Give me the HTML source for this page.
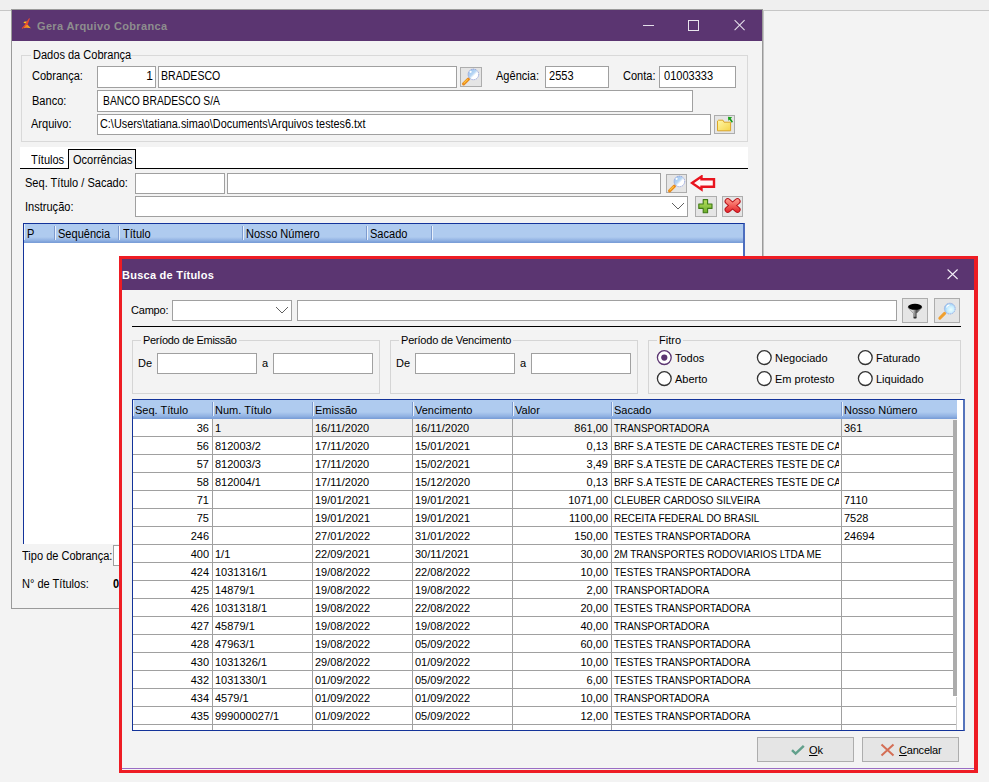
<!DOCTYPE html><html><head><meta charset="utf-8"><style>
html,body{margin:0;padding:0;}
body{width:989px;height:782px;position:relative;overflow:hidden;background:#f3f3f3;font-family:"Liberation Sans",sans-serif;color:#000;}
.t{position:absolute;white-space:nowrap;font-family:"Liberation Sans",sans-serif;}
svg{position:absolute;}
</style></head><body>
<div style="position:absolute;left:0px;top:0px;width:989px;height:10px;background:#efefef;"></div>
<div style="position:absolute;left:0px;top:10px;width:989px;height:1px;background:#c6c6c6;"></div>
<div style="position:absolute;left:11px;top:9px;width:752px;height:600px;box-sizing:border-box;border:1px solid #9a9a9a;background:#f3f3f3;"></div>
<div style="position:absolute;left:763px;top:10px;width:1px;height:599px;background:#c4c4c4;"></div>
<div style="position:absolute;left:12px;top:10px;width:750px;height:31px;background:#5b3571;"></div>
<svg style="left:18px;top:15px" width="18" height="18" viewBox="0 0 18 18"><defs><linearGradient id="ig" x1="0" y1="0" x2="1" y2="0"><stop offset="0" stop-color="#f06a28"/><stop offset="1" stop-color="#fcc41c"/></linearGradient></defs><path d="M5.5 7.2 L6.9 6.5 L9 6.5 L8.2 8.4 L6 8 Z" fill="#fbbe20"/><path d="M7.2 10 L9.4 9.4 L13.3 13.7 L12.2 13.1 L8.5 12.8 L5.5 13.3 Z" fill="url(#ig)"/><path d="M12 3.2 L9.6 9.4 L7.6 10.6 L4.2 14 L3.8 12.9 L6.7 9.9 L7.8 8.3 L8.8 6.4 L10.9 3.6 Z" fill="#ec4a2e"/></svg>
<span class="t" style="left:37px;top:20px;font-size:11px;line-height:13px;font-weight:bold;color:#8e8e8e;letter-spacing:0.35px;">Gera Arquivo Cobranca</span>
<div style="position:absolute;left:643px;top:25px;width:11px;height:1px;background:#e4dfea;"></div>
<div style="position:absolute;left:688px;top:20px;width:11px;height:11px;box-sizing:border-box;border:1px solid #e8e4ec;"></div>
<svg style="left:733px;top:19px" width="13" height="13" viewBox="0 0 13 13"><path d="M1.6 1.2 L11.6 11.2 M11.6 1.2 L1.6 11.2" stroke="#e4dfea" stroke-width="1.05"/></svg>
<div style="position:absolute;left:21px;top:55px;width:727px;height:87px;box-sizing:border-box;border:1px solid #d9d9d9;"></div>
<div style="position:absolute;left:31px;top:50px;width:100px;height:9px;background:#f3f3f3;"></div>
<span class="t" style="left:33px;top:48px;font-size:12px;line-height:14px;transform:scaleX(0.92);transform-origin:0 0;">Dados da Cobrança</span>
<span class="t" style="left:32px;top:69px;font-size:12px;line-height:14px;transform:scaleX(0.92);transform-origin:0 0;">Cobrança:</span>
<div style="position:absolute;left:97px;top:66px;width:59px;height:22px;box-sizing:border-box;border:1px solid #a0a0a0;background:#fff;"></div>
<span class="t" style="right:836px;top:69px;font-size:12px;line-height:14px;">1</span>
<div style="position:absolute;left:158px;top:66px;width:299px;height:22px;box-sizing:border-box;border:1px solid #a0a0a0;background:#fff;"></div>
<span class="t" style="left:161px;top:69px;font-size:12px;line-height:14px;transform:scaleX(0.88);transform-origin:0 0;">BRADESCO</span>
<div style="position:absolute;left:460px;top:67px;width:22px;height:20px;box-sizing:border-box;border:1px solid #adadad;background:#e5e5e5;"></div>
<svg style="left:460px;top:67px" width="22" height="21" viewBox="0 0 22 21"><defs><linearGradient id="lg460" x1="0" y1="0" x2="1" y2="1"><stop offset="0" stop-color="#8fbcec"/><stop offset="0.45" stop-color="#b8d6f4"/><stop offset="0.6" stop-color="#ffffff"/><stop offset="1" stop-color="#ffffff"/></linearGradient></defs><line x1="3.6" y1="16.8" x2="8.4" y2="12.2" stroke="#e88a1c" stroke-width="3.2" stroke-linecap="round"/><line x1="4" y1="16" x2="7.6" y2="12.6" stroke="#ffc640" stroke-width="1.1" stroke-linecap="round" stroke-dasharray="1.2 0.6"/><circle cx="13.4" cy="7.4" r="5.3" fill="url(#lg460)" stroke="#8a9ad8" stroke-width="0.9" stroke-dasharray="1.3 0.7"/><circle cx="10.6" cy="4.8" r="1.1" fill="#ffffff"/></svg>
<span class="t" style="left:496px;top:69px;font-size:12px;line-height:14px;transform:scaleX(0.92);transform-origin:0 0;">Agência:</span>
<div style="position:absolute;left:545px;top:66px;width:64px;height:22px;box-sizing:border-box;border:1px solid #a0a0a0;background:#fff;"></div>
<span class="t" style="left:549px;top:69px;font-size:12px;line-height:14px;transform:scaleX(0.92);transform-origin:0 0;">2553</span>
<span class="t" style="left:623px;top:69px;font-size:12px;line-height:14px;transform:scaleX(0.92);transform-origin:0 0;">Conta:</span>
<div style="position:absolute;left:659px;top:66px;width:77px;height:22px;box-sizing:border-box;border:1px solid #a0a0a0;background:#fff;"></div>
<span class="t" style="left:664px;top:69px;font-size:12px;line-height:14px;transform:scaleX(0.92);transform-origin:0 0;">01003333</span>
<span class="t" style="left:32px;top:94px;font-size:12px;line-height:14px;transform:scaleX(0.92);transform-origin:0 0;">Banco:</span>
<div style="position:absolute;left:97px;top:90px;width:596px;height:22px;box-sizing:border-box;border:1px solid #a0a0a0;background:#fff;"></div>
<span class="t" style="left:103px;top:94px;font-size:12px;line-height:14px;transform:scaleX(0.86);transform-origin:0 0;">BANCO BRADESCO S/A</span>
<span class="t" style="left:31px;top:117px;font-size:12px;line-height:14px;transform:scaleX(0.92);transform-origin:0 0;">Arquivo:</span>
<div style="position:absolute;left:97px;top:114px;width:614px;height:21px;box-sizing:border-box;border:1px solid #a0a0a0;background:#fff;"></div>
<span class="t" style="left:100px;top:117px;font-size:12px;line-height:14px;transform:scaleX(0.905);transform-origin:0 0;">C:\Users\tatiana.simao\Documents\Arquivos testes6.txt</span>
<div style="position:absolute;left:714px;top:115px;width:21px;height:19px;box-sizing:border-box;border:1px solid #adadad;background:#e5e5e5;"></div>
<svg style="left:714px;top:115px" width="21" height="19" viewBox="0 0 21 19"><defs><linearGradient id="fg" x1="0" y1="0" x2="1" y2="1"><stop offset="0" stop-color="#fff7a8"/><stop offset="1" stop-color="#f5d44a"/></linearGradient></defs><path d="M3.5 6 L3.5 15.8 L16.6 15.8 L16.6 7.2 L10 7.2 L9 5.2 L4.5 5.2 Z" fill="url(#fg)" stroke="#dba628" stroke-width="1"/><path d="M14 1.8 L18.2 2.2 L14.3 5.8 Z" fill="#16a016"/><line x1="15.6" y1="3.6" x2="18.4" y2="7.2" stroke="#1a9a1a" stroke-width="1.6"/></svg>
<div style="position:absolute;left:20px;top:147px;width:728px;height:21px;background:#fff;"></div>
<div style="position:absolute;left:20px;top:168px;width:728px;height:1px;background:#000;"></div>
<div style="position:absolute;left:68px;top:149px;width:68px;height:20px;box-sizing:border-box;border:1px solid #000;border-bottom:none;background:#f3f3f3;"></div>
<span class="t" style="left:31px;top:153px;font-size:12px;line-height:14px;transform:scaleX(0.92);transform-origin:0 0;">Títulos</span>
<span class="t" style="left:73px;top:153px;font-size:12px;line-height:14px;transform:scaleX(0.92);transform-origin:0 0;">Ocorrências</span>
<span class="t" style="left:25px;top:176px;font-size:12px;line-height:14px;transform:scaleX(0.92);transform-origin:0 0;">Seq. Título / Sacado:</span>
<div style="position:absolute;left:135px;top:173px;width:90px;height:21px;box-sizing:border-box;border:1px solid #a0a0a0;background:#fff;"></div>
<div style="position:absolute;left:227px;top:173px;width:434px;height:21px;box-sizing:border-box;border:1px solid #a0a0a0;background:#fff;"></div>
<div style="position:absolute;left:666px;top:174px;width:21px;height:19px;box-sizing:border-box;border:1px solid #adadad;background:#e5e5e5;"></div>
<svg style="left:666px;top:174px" width="22" height="21" viewBox="0 0 22 21"><defs><linearGradient id="lg666" x1="0" y1="0" x2="1" y2="1"><stop offset="0" stop-color="#8fbcec"/><stop offset="0.45" stop-color="#b8d6f4"/><stop offset="0.6" stop-color="#ffffff"/><stop offset="1" stop-color="#ffffff"/></linearGradient></defs><line x1="3.6" y1="16.8" x2="8.4" y2="12.2" stroke="#e88a1c" stroke-width="3.2" stroke-linecap="round"/><line x1="4" y1="16" x2="7.6" y2="12.6" stroke="#ffc640" stroke-width="1.1" stroke-linecap="round" stroke-dasharray="1.2 0.6"/><circle cx="13.4" cy="7.4" r="5.3" fill="url(#lg666)" stroke="#8a9ad8" stroke-width="0.9" stroke-dasharray="1.3 0.7"/><circle cx="10.6" cy="4.8" r="1.1" fill="#ffffff"/></svg>
<svg style="left:690px;top:175px" width="28" height="18" viewBox="0 0 28 18"><path d="M2 8 L11.5 1.5 L11.5 4.3 L24 4.3 L24 11.7 L11.5 11.7 L11.5 14.5 Z" fill="#fff8f8" stroke="#e8141e" stroke-width="2.4" stroke-linejoin="miter"/></svg>
<span class="t" style="left:25px;top:200px;font-size:12px;line-height:14px;transform:scaleX(0.92);transform-origin:0 0;">Instrução:</span>
<div style="position:absolute;left:135px;top:196px;width:553px;height:21px;box-sizing:border-box;border:1px solid #a0a0a0;background:#fff;"></div>
<svg style="left:671px;top:202px" width="14" height="8" viewBox="0 0 14 8"><path d="M1 1 L7 7 L13 1" fill="none" stroke="#606060" stroke-width="1"/></svg>
<div style="position:absolute;left:695px;top:196px;width:22px;height:21px;box-sizing:border-box;border:1px solid #adadad;background:#e5e5e5;"></div>
<svg style="left:695px;top:196px" width="22" height="21" viewBox="0 0 22 21"><defs><linearGradient id="gp" x1="0" y1="0" x2="0" y2="1"><stop offset="0" stop-color="#b8e060"/><stop offset="1" stop-color="#6cae2a"/></linearGradient></defs><path d="M8.2 3.6 L12.6 3.6 L12.6 8 L17 8 L17 12.4 L12.6 12.4 L12.6 16.8 L8.2 16.8 L8.2 12.4 L3.8 12.4 L3.8 8 L8.2 8 Z" fill="url(#gp)" stroke="#3f7a14" stroke-width="1.1" stroke-linejoin="round"/></svg>
<div style="position:absolute;left:722px;top:196px;width:21px;height:21px;box-sizing:border-box;border:1px solid #adadad;background:#e5e5e5;"></div>
<svg style="left:722px;top:196px" width="21" height="20" viewBox="0 0 21 20"><defs><linearGradient id="rx" gradientUnits="userSpaceOnUse" x1="0" y1="2" x2="0" y2="17"><stop offset="0" stop-color="#ffa494"/><stop offset="0.5" stop-color="#f4605a"/><stop offset="1" stop-color="#e01c24"/></linearGradient></defs><path d="M5.8 5.3 L15.4 13.7 M15.4 5.3 L5.8 13.7" stroke="#b8141c" stroke-width="6.4" stroke-linecap="round"/><path d="M5.8 5.3 L15.4 13.7 M15.4 5.3 L5.8 13.7" stroke="url(#rx)" stroke-width="4.4" stroke-linecap="round"/></svg>
<div style="position:absolute;left:23px;top:223px;width:722px;height:321px;box-sizing:border-box;border:1px solid #13339a;border-right:2px solid #4d6ebf;border-bottom:none;background:#fff;"></div>
<div style="position:absolute;left:24px;top:224px;width:719px;height:19px;background:linear-gradient(#afcbef 0,#afcbef 13px,#8badE0 17px,#7b9fd8 18px);"></div>
<div style="position:absolute;left:24px;top:224px;width:1px;height:16px;background:#e4edf9;"></div>
<div style="position:absolute;left:54px;top:226px;width:1px;height:14px;background:#7d9bcf;"></div>
<div style="position:absolute;left:55px;top:226px;width:1px;height:14px;background:#e8f0fb;"></div>
<div style="position:absolute;left:118px;top:226px;width:1px;height:14px;background:#7d9bcf;"></div>
<div style="position:absolute;left:119px;top:226px;width:1px;height:14px;background:#e8f0fb;"></div>
<div style="position:absolute;left:242px;top:226px;width:1px;height:14px;background:#7d9bcf;"></div>
<div style="position:absolute;left:243px;top:226px;width:1px;height:14px;background:#e8f0fb;"></div>
<div style="position:absolute;left:366px;top:226px;width:1px;height:14px;background:#7d9bcf;"></div>
<div style="position:absolute;left:367px;top:226px;width:1px;height:14px;background:#e8f0fb;"></div>
<div style="position:absolute;left:431px;top:226px;width:1px;height:14px;background:#7d9bcf;"></div>
<div style="position:absolute;left:432px;top:226px;width:1px;height:14px;background:#e8f0fb;"></div>
<span class="t" style="left:27px;top:227px;font-size:12px;line-height:14px;transform:scaleX(0.92);transform-origin:0 0;">P</span>
<span class="t" style="left:58px;top:227px;font-size:12px;line-height:14px;transform:scaleX(0.92);transform-origin:0 0;">Sequência</span>
<span class="t" style="left:123px;top:227px;font-size:12px;line-height:14px;transform:scaleX(0.92);transform-origin:0 0;">Título</span>
<span class="t" style="left:246px;top:227px;font-size:12px;line-height:14px;transform:scaleX(0.92);transform-origin:0 0;">Nosso Número</span>
<span class="t" style="left:370px;top:227px;font-size:12px;line-height:14px;transform:scaleX(0.92);transform-origin:0 0;">Sacado</span>
<span class="t" style="left:22px;top:549px;font-size:12px;line-height:14px;transform:scaleX(0.92);transform-origin:0 0;">Tipo de Cobrança:</span>
<div style="position:absolute;left:113px;top:545px;width:18px;height:21px;box-sizing:border-box;border:1px solid #a0a0a0;background:#fff;"></div>
<span class="t" style="left:22px;top:577px;font-size:12px;line-height:14px;transform:scaleX(0.92);transform-origin:0 0;">N° de Títulos:</span>
<span class="t" style="left:113px;top:577px;font-size:12px;line-height:14px;transform:scaleX(0.92);transform-origin:0 0;font-weight:bold;">0</span>
<div style="position:absolute;left:119px;top:256px;width:859px;height:517px;box-sizing:border-box;border:3px solid #ee1c24;border-right-width:4px;background:#f3f3f3;"></div>
<div style="position:absolute;left:122px;top:259px;width:852px;height:31px;background:#5b3571;"></div>
<div style="position:absolute;left:122px;top:768px;width:852px;height:1px;background:#9a6cc4;"></div>
<span class="t" style="left:122px;top:269px;font-size:11px;line-height:13px;font-weight:bold;color:#fff;letter-spacing:0.25px;">Busca de Títulos</span>
<svg style="left:946px;top:268px" width="13" height="12" viewBox="0 0 13 12"><path d="M1.6 1.5 L11.6 11 M11.6 1.5 L1.6 11" stroke="#f4f0f8" stroke-width="1.05"/></svg>
<span class="t" style="left:131px;top:304px;font-size:11px;line-height:13px;letter-spacing:-0.2px;">Campo:</span>
<div style="position:absolute;left:172px;top:300px;width:120px;height:21px;box-sizing:border-box;border:1px solid #a0a0a0;background:#fff;"></div>
<svg style="left:275px;top:306px" width="14" height="8" viewBox="0 0 14 8"><path d="M1 1 L7 7 L13 1" fill="none" stroke="#606060" stroke-width="1"/></svg>
<div style="position:absolute;left:297px;top:300px;width:600px;height:21px;box-sizing:border-box;border:1px solid #a0a0a0;background:#fff;"></div>
<div style="position:absolute;left:902px;top:298px;width:26px;height:25px;box-sizing:border-box;border:1px solid #adadad;background:#e5e5e5;"></div>
<svg style="left:902px;top:298px" width="25" height="25" viewBox="0 0 25 25"><defs><linearGradient id="fn" x1="0" y1="0" x2="1" y2="0"><stop offset="0" stop-color="#ffffff"/><stop offset="0.35" stop-color="#d0d0d0"/><stop offset="0.6" stop-color="#505050"/><stop offset="1" stop-color="#9a9a9a"/></linearGradient></defs><path d="M6 9.5 L11.6 15.6 L11.6 20 L14.4 20 L14.4 15.6 L20 9.5 Z" fill="url(#fn)"/><path d="M6 9.5 L11.6 15.6 L11.6 20 L14.4 20 L14.4 15.6 L20 9.5" fill="none" stroke="#707070" stroke-width="0.6"/><ellipse cx="13" cy="8.8" rx="7" ry="3" fill="#000"/><rect x="11.8" y="18.8" width="2.4" height="1.6" fill="#303030"/></svg>
<div style="position:absolute;left:934px;top:298px;width:26px;height:25px;box-sizing:border-box;border:1px solid #adadad;background:#e5e5e5;"></div>
<svg style="left:934px;top:298px" width="26" height="25" viewBox="0 0 26 25"><defs><radialGradient id="lb934" cx="0.6" cy="0.6" r="0.65"><stop offset="0" stop-color="#eaffff"/><stop offset="0.5" stop-color="#c8ecff"/><stop offset="1" stop-color="#8ec4f0"/></radialGradient></defs><line x1="5.8" y1="20.2" x2="10.6" y2="15.4" stroke="#f0a030" stroke-width="3" stroke-linecap="round"/><circle cx="15.8" cy="10.6" r="5.4" fill="url(#lb934)" stroke="#9ab0e6" stroke-width="1" stroke-dasharray="1.5 0.7"/><path d="M12.5 9.5 A3.5 3.5 0 0 1 15.5 6.8" fill="none" stroke="#fff" stroke-width="1.2"/></svg>
<div style="position:absolute;left:132px;top:326px;width:829px;height:1px;background:#000;"></div>
<div style="position:absolute;left:132px;top:340px;width:248px;height:54px;box-sizing:border-box;border:1px solid #d5d5d5;"></div>
<span class="t" style="left:141px;top:334px;font-size:11px;line-height:13px;background:#f3f3f3;padding:0 2px;letter-spacing:-0.3px;">Período de Emissão</span>
<div style="position:absolute;left:390px;top:340px;width:248px;height:54px;box-sizing:border-box;border:1px solid #d5d5d5;"></div>
<span class="t" style="left:399px;top:334px;font-size:11px;line-height:13px;background:#f3f3f3;padding:0 2px;letter-spacing:-0.2px;">Período de Vencimento</span>
<div style="position:absolute;left:648px;top:340px;width:313px;height:54px;box-sizing:border-box;border:1px solid #d5d5d5;"></div>
<span class="t" style="left:657px;top:334px;font-size:11px;line-height:13px;background:#f3f3f3;padding:0 2px;letter-spacing:0px;">Fitro</span>
<span class="t" style="left:138px;top:357px;font-size:11px;line-height:13px;">De</span>
<div style="position:absolute;left:157px;top:353px;width:100px;height:21px;box-sizing:border-box;border:1px solid #a0a0a0;background:#fff;"></div>
<span class="t" style="left:262px;top:357px;font-size:11px;line-height:13px;">a</span>
<div style="position:absolute;left:273px;top:353px;width:100px;height:21px;box-sizing:border-box;border:1px solid #a0a0a0;background:#fff;"></div>
<span class="t" style="left:396px;top:357px;font-size:11px;line-height:13px;">De</span>
<div style="position:absolute;left:415px;top:353px;width:100px;height:21px;box-sizing:border-box;border:1px solid #a0a0a0;background:#fff;"></div>
<span class="t" style="left:520px;top:357px;font-size:11px;line-height:13px;">a</span>
<div style="position:absolute;left:531px;top:353px;width:100px;height:21px;box-sizing:border-box;border:1px solid #a0a0a0;background:#fff;"></div>
<svg style="left:656px;top:349px" width="17" height="17" viewBox="0 0 17 17"><circle cx="8.3" cy="8.6" r="6.9" fill="#fff" stroke="#5b3571" stroke-width="1.3"/><circle cx="8.3" cy="8.6" r="3.1" fill="#5b3571"/></svg>
<span class="t" style="left:675px;top:352px;font-size:11px;line-height:13px;">Todos</span>
<svg style="left:656px;top:370px" width="17" height="17" viewBox="0 0 17 17"><circle cx="8.3" cy="8.6" r="6.9" fill="#fff" stroke="#333" stroke-width="1.3"/></svg>
<span class="t" style="left:675px;top:373px;font-size:11px;line-height:13px;">Aberto</span>
<svg style="left:756px;top:349px" width="17" height="17" viewBox="0 0 17 17"><circle cx="8.3" cy="8.6" r="6.9" fill="#fff" stroke="#333" stroke-width="1.3"/></svg>
<span class="t" style="left:775px;top:352px;font-size:11px;line-height:13px;">Negociado</span>
<svg style="left:756px;top:370px" width="17" height="17" viewBox="0 0 17 17"><circle cx="8.3" cy="8.6" r="6.9" fill="#fff" stroke="#333" stroke-width="1.3"/></svg>
<span class="t" style="left:775px;top:373px;font-size:11px;line-height:13px;">Em protesto</span>
<svg style="left:857px;top:349px" width="17" height="17" viewBox="0 0 17 17"><circle cx="8.3" cy="8.6" r="6.9" fill="#fff" stroke="#333" stroke-width="1.3"/></svg>
<span class="t" style="left:876px;top:352px;font-size:11px;line-height:13px;">Faturado</span>
<svg style="left:857px;top:370px" width="17" height="17" viewBox="0 0 17 17"><circle cx="8.3" cy="8.6" r="6.9" fill="#fff" stroke="#333" stroke-width="1.3"/></svg>
<span class="t" style="left:876px;top:373px;font-size:11px;line-height:13px;">Liquidado</span>
<div style="position:absolute;left:132px;top:399px;width:833px;height:332px;box-sizing:border-box;border:1px solid #13339a;border-right:2px solid #5574bb;background:#fff;"></div>
<div style="position:absolute;left:133px;top:400px;width:824px;height:19px;background:linear-gradient(#afcbef 0,#afcbef 12px,#8badE0 17px,#7b9fd8 18px);"></div>
<div style="position:absolute;left:133px;top:400px;width:1px;height:16px;background:#e4edf9;"></div>
<div style="position:absolute;left:212px;top:402px;width:1px;height:14px;background:#7d9bcf;"></div>
<div style="position:absolute;left:213px;top:402px;width:1px;height:14px;background:#e8f0fb;"></div>
<div style="position:absolute;left:312px;top:402px;width:1px;height:14px;background:#7d9bcf;"></div>
<div style="position:absolute;left:313px;top:402px;width:1px;height:14px;background:#e8f0fb;"></div>
<div style="position:absolute;left:412px;top:402px;width:1px;height:14px;background:#7d9bcf;"></div>
<div style="position:absolute;left:413px;top:402px;width:1px;height:14px;background:#e8f0fb;"></div>
<div style="position:absolute;left:512px;top:402px;width:1px;height:14px;background:#7d9bcf;"></div>
<div style="position:absolute;left:513px;top:402px;width:1px;height:14px;background:#e8f0fb;"></div>
<div style="position:absolute;left:611px;top:402px;width:1px;height:14px;background:#7d9bcf;"></div>
<div style="position:absolute;left:612px;top:402px;width:1px;height:14px;background:#e8f0fb;"></div>
<div style="position:absolute;left:841px;top:402px;width:1px;height:14px;background:#7d9bcf;"></div>
<div style="position:absolute;left:842px;top:402px;width:1px;height:14px;background:#e8f0fb;"></div>
<span class="t" style="left:135px;top:404px;font-size:11px;line-height:13px;">Seq. Título</span>
<span class="t" style="left:215px;top:404px;font-size:11px;line-height:13px;">Num. Título</span>
<span class="t" style="left:315px;top:404px;font-size:11px;line-height:13px;">Emissão</span>
<span class="t" style="left:415px;top:404px;font-size:11px;line-height:13px;">Vencimento</span>
<span class="t" style="left:515px;top:404px;font-size:11px;line-height:13px;">Valor</span>
<span class="t" style="left:614px;top:404px;font-size:11px;line-height:13px;">Sacado</span>
<span class="t" style="left:844px;top:404px;font-size:11px;line-height:13px;">Nosso Número</span>
<div style="position:absolute;left:133px;top:419px;width:824px;height:311px;overflow:hidden;">
<div style="position:absolute;left:80px;top:0px;width:744px;height:17px;background:#f0f0f0;"></div>
<div style="position:absolute;left:0;top:17px;width:824px;height:1px;background:#a0a0a0;"></div>
<span class="t" style="left:-1px;width:77px;text-align:right;top:3px;font-size:11px;line-height:13px;">36</span>
<span class="t" style="left:82px;top:3px;width:95px;overflow:hidden;font-size:11px;line-height:13px;">1</span>
<span class="t" style="left:182px;top:3px;width:95px;overflow:hidden;font-size:11px;line-height:13px;">16/11/2020</span>
<span class="t" style="left:282px;top:3px;width:95px;overflow:hidden;font-size:11px;line-height:13px;">16/11/2020</span>
<span class="t" style="left:379px;width:96px;text-align:right;top:3px;font-size:11px;line-height:13px;">861,00</span>
<div style="position:absolute;left:481px;top:3px;width:225px;height:13px;overflow:hidden;"><span class="t" style="left:0;top:0;font-size:11px;line-height:13px;transform:scaleX(0.9);transform-origin:0 0;">TRANSPORTADORA</span></div>
<span class="t" style="left:711px;top:3px;width:111px;overflow:hidden;font-size:11px;line-height:13px;">361</span>
<div style="position:absolute;left:0;top:35px;width:824px;height:1px;background:#a0a0a0;"></div>
<span class="t" style="left:-1px;width:77px;text-align:right;top:21px;font-size:11px;line-height:13px;">56</span>
<span class="t" style="left:82px;top:21px;width:95px;overflow:hidden;font-size:11px;line-height:13px;">812003/2</span>
<span class="t" style="left:182px;top:21px;width:95px;overflow:hidden;font-size:11px;line-height:13px;">17/11/2020</span>
<span class="t" style="left:282px;top:21px;width:95px;overflow:hidden;font-size:11px;line-height:13px;">15/01/2021</span>
<span class="t" style="left:379px;width:96px;text-align:right;top:21px;font-size:11px;line-height:13px;">0,13</span>
<div style="position:absolute;left:481px;top:21px;width:225px;height:13px;overflow:hidden;"><span class="t" style="left:0;top:0;font-size:11px;line-height:13px;transform:scaleX(0.9);transform-origin:0 0;">BRF S.A TESTE DE CARACTERES TESTE DE CARACTERES</span></div>
<div style="position:absolute;left:0;top:53px;width:824px;height:1px;background:#a0a0a0;"></div>
<span class="t" style="left:-1px;width:77px;text-align:right;top:39px;font-size:11px;line-height:13px;">57</span>
<span class="t" style="left:82px;top:39px;width:95px;overflow:hidden;font-size:11px;line-height:13px;">812003/3</span>
<span class="t" style="left:182px;top:39px;width:95px;overflow:hidden;font-size:11px;line-height:13px;">17/11/2020</span>
<span class="t" style="left:282px;top:39px;width:95px;overflow:hidden;font-size:11px;line-height:13px;">15/02/2021</span>
<span class="t" style="left:379px;width:96px;text-align:right;top:39px;font-size:11px;line-height:13px;">3,49</span>
<div style="position:absolute;left:481px;top:39px;width:225px;height:13px;overflow:hidden;"><span class="t" style="left:0;top:0;font-size:11px;line-height:13px;transform:scaleX(0.9);transform-origin:0 0;">BRF S.A TESTE DE CARACTERES TESTE DE CARACTERES</span></div>
<div style="position:absolute;left:0;top:71px;width:824px;height:1px;background:#a0a0a0;"></div>
<span class="t" style="left:-1px;width:77px;text-align:right;top:57px;font-size:11px;line-height:13px;">58</span>
<span class="t" style="left:82px;top:57px;width:95px;overflow:hidden;font-size:11px;line-height:13px;">812004/1</span>
<span class="t" style="left:182px;top:57px;width:95px;overflow:hidden;font-size:11px;line-height:13px;">17/11/2020</span>
<span class="t" style="left:282px;top:57px;width:95px;overflow:hidden;font-size:11px;line-height:13px;">15/12/2020</span>
<span class="t" style="left:379px;width:96px;text-align:right;top:57px;font-size:11px;line-height:13px;">0,13</span>
<div style="position:absolute;left:481px;top:57px;width:225px;height:13px;overflow:hidden;"><span class="t" style="left:0;top:0;font-size:11px;line-height:13px;transform:scaleX(0.9);transform-origin:0 0;">BRF S.A TESTE DE CARACTERES TESTE DE CARACTERES</span></div>
<div style="position:absolute;left:0;top:89px;width:824px;height:1px;background:#a0a0a0;"></div>
<span class="t" style="left:-1px;width:77px;text-align:right;top:75px;font-size:11px;line-height:13px;">71</span>
<span class="t" style="left:182px;top:75px;width:95px;overflow:hidden;font-size:11px;line-height:13px;">19/01/2021</span>
<span class="t" style="left:282px;top:75px;width:95px;overflow:hidden;font-size:11px;line-height:13px;">19/01/2021</span>
<span class="t" style="left:379px;width:96px;text-align:right;top:75px;font-size:11px;line-height:13px;">1071,00</span>
<div style="position:absolute;left:481px;top:75px;width:225px;height:13px;overflow:hidden;"><span class="t" style="left:0;top:0;font-size:11px;line-height:13px;transform:scaleX(0.9);transform-origin:0 0;">CLEUBER CARDOSO SILVEIRA</span></div>
<span class="t" style="left:711px;top:75px;width:111px;overflow:hidden;font-size:11px;line-height:13px;">7110</span>
<div style="position:absolute;left:0;top:107px;width:824px;height:1px;background:#a0a0a0;"></div>
<span class="t" style="left:-1px;width:77px;text-align:right;top:93px;font-size:11px;line-height:13px;">75</span>
<span class="t" style="left:182px;top:93px;width:95px;overflow:hidden;font-size:11px;line-height:13px;">19/01/2021</span>
<span class="t" style="left:282px;top:93px;width:95px;overflow:hidden;font-size:11px;line-height:13px;">19/01/2021</span>
<span class="t" style="left:379px;width:96px;text-align:right;top:93px;font-size:11px;line-height:13px;">1100,00</span>
<div style="position:absolute;left:481px;top:93px;width:225px;height:13px;overflow:hidden;"><span class="t" style="left:0;top:0;font-size:11px;line-height:13px;transform:scaleX(0.9);transform-origin:0 0;">RECEITA FEDERAL DO BRASIL</span></div>
<span class="t" style="left:711px;top:93px;width:111px;overflow:hidden;font-size:11px;line-height:13px;">7528</span>
<div style="position:absolute;left:0;top:125px;width:824px;height:1px;background:#a0a0a0;"></div>
<span class="t" style="left:-1px;width:77px;text-align:right;top:111px;font-size:11px;line-height:13px;">246</span>
<span class="t" style="left:182px;top:111px;width:95px;overflow:hidden;font-size:11px;line-height:13px;">27/01/2022</span>
<span class="t" style="left:282px;top:111px;width:95px;overflow:hidden;font-size:11px;line-height:13px;">31/01/2022</span>
<span class="t" style="left:379px;width:96px;text-align:right;top:111px;font-size:11px;line-height:13px;">150,00</span>
<div style="position:absolute;left:481px;top:111px;width:225px;height:13px;overflow:hidden;"><span class="t" style="left:0;top:0;font-size:11px;line-height:13px;transform:scaleX(0.9);transform-origin:0 0;">TESTES TRANSPORTADORA</span></div>
<span class="t" style="left:711px;top:111px;width:111px;overflow:hidden;font-size:11px;line-height:13px;">24694</span>
<div style="position:absolute;left:0;top:143px;width:824px;height:1px;background:#a0a0a0;"></div>
<span class="t" style="left:-1px;width:77px;text-align:right;top:129px;font-size:11px;line-height:13px;">400</span>
<span class="t" style="left:82px;top:129px;width:95px;overflow:hidden;font-size:11px;line-height:13px;">1/1</span>
<span class="t" style="left:182px;top:129px;width:95px;overflow:hidden;font-size:11px;line-height:13px;">22/09/2021</span>
<span class="t" style="left:282px;top:129px;width:95px;overflow:hidden;font-size:11px;line-height:13px;">30/11/2021</span>
<span class="t" style="left:379px;width:96px;text-align:right;top:129px;font-size:11px;line-height:13px;">30,00</span>
<div style="position:absolute;left:481px;top:129px;width:225px;height:13px;overflow:hidden;"><span class="t" style="left:0;top:0;font-size:11px;line-height:13px;transform:scaleX(0.9);transform-origin:0 0;">2M TRANSPORTES RODOVIARIOS LTDA ME</span></div>
<div style="position:absolute;left:0;top:161px;width:824px;height:1px;background:#a0a0a0;"></div>
<span class="t" style="left:-1px;width:77px;text-align:right;top:147px;font-size:11px;line-height:13px;">424</span>
<span class="t" style="left:82px;top:147px;width:95px;overflow:hidden;font-size:11px;line-height:13px;">1031316/1</span>
<span class="t" style="left:182px;top:147px;width:95px;overflow:hidden;font-size:11px;line-height:13px;">19/08/2022</span>
<span class="t" style="left:282px;top:147px;width:95px;overflow:hidden;font-size:11px;line-height:13px;">22/08/2022</span>
<span class="t" style="left:379px;width:96px;text-align:right;top:147px;font-size:11px;line-height:13px;">10,00</span>
<div style="position:absolute;left:481px;top:147px;width:225px;height:13px;overflow:hidden;"><span class="t" style="left:0;top:0;font-size:11px;line-height:13px;transform:scaleX(0.9);transform-origin:0 0;">TESTES TRANSPORTADORA</span></div>
<div style="position:absolute;left:0;top:179px;width:824px;height:1px;background:#a0a0a0;"></div>
<span class="t" style="left:-1px;width:77px;text-align:right;top:165px;font-size:11px;line-height:13px;">425</span>
<span class="t" style="left:82px;top:165px;width:95px;overflow:hidden;font-size:11px;line-height:13px;">14879/1</span>
<span class="t" style="left:182px;top:165px;width:95px;overflow:hidden;font-size:11px;line-height:13px;">19/08/2022</span>
<span class="t" style="left:282px;top:165px;width:95px;overflow:hidden;font-size:11px;line-height:13px;">19/08/2022</span>
<span class="t" style="left:379px;width:96px;text-align:right;top:165px;font-size:11px;line-height:13px;">2,00</span>
<div style="position:absolute;left:481px;top:165px;width:225px;height:13px;overflow:hidden;"><span class="t" style="left:0;top:0;font-size:11px;line-height:13px;transform:scaleX(0.9);transform-origin:0 0;">TRANSPORTADORA</span></div>
<div style="position:absolute;left:0;top:197px;width:824px;height:1px;background:#a0a0a0;"></div>
<span class="t" style="left:-1px;width:77px;text-align:right;top:183px;font-size:11px;line-height:13px;">426</span>
<span class="t" style="left:82px;top:183px;width:95px;overflow:hidden;font-size:11px;line-height:13px;">1031318/1</span>
<span class="t" style="left:182px;top:183px;width:95px;overflow:hidden;font-size:11px;line-height:13px;">19/08/2022</span>
<span class="t" style="left:282px;top:183px;width:95px;overflow:hidden;font-size:11px;line-height:13px;">22/08/2022</span>
<span class="t" style="left:379px;width:96px;text-align:right;top:183px;font-size:11px;line-height:13px;">20,00</span>
<div style="position:absolute;left:481px;top:183px;width:225px;height:13px;overflow:hidden;"><span class="t" style="left:0;top:0;font-size:11px;line-height:13px;transform:scaleX(0.9);transform-origin:0 0;">TESTES TRANSPORTADORA</span></div>
<div style="position:absolute;left:0;top:215px;width:824px;height:1px;background:#a0a0a0;"></div>
<span class="t" style="left:-1px;width:77px;text-align:right;top:201px;font-size:11px;line-height:13px;">427</span>
<span class="t" style="left:82px;top:201px;width:95px;overflow:hidden;font-size:11px;line-height:13px;">45879/1</span>
<span class="t" style="left:182px;top:201px;width:95px;overflow:hidden;font-size:11px;line-height:13px;">19/08/2022</span>
<span class="t" style="left:282px;top:201px;width:95px;overflow:hidden;font-size:11px;line-height:13px;">19/08/2022</span>
<span class="t" style="left:379px;width:96px;text-align:right;top:201px;font-size:11px;line-height:13px;">40,00</span>
<div style="position:absolute;left:481px;top:201px;width:225px;height:13px;overflow:hidden;"><span class="t" style="left:0;top:0;font-size:11px;line-height:13px;transform:scaleX(0.9);transform-origin:0 0;">TRANSPORTADORA</span></div>
<div style="position:absolute;left:0;top:233px;width:824px;height:1px;background:#a0a0a0;"></div>
<span class="t" style="left:-1px;width:77px;text-align:right;top:219px;font-size:11px;line-height:13px;">428</span>
<span class="t" style="left:82px;top:219px;width:95px;overflow:hidden;font-size:11px;line-height:13px;">47963/1</span>
<span class="t" style="left:182px;top:219px;width:95px;overflow:hidden;font-size:11px;line-height:13px;">19/08/2022</span>
<span class="t" style="left:282px;top:219px;width:95px;overflow:hidden;font-size:11px;line-height:13px;">05/09/2022</span>
<span class="t" style="left:379px;width:96px;text-align:right;top:219px;font-size:11px;line-height:13px;">60,00</span>
<div style="position:absolute;left:481px;top:219px;width:225px;height:13px;overflow:hidden;"><span class="t" style="left:0;top:0;font-size:11px;line-height:13px;transform:scaleX(0.9);transform-origin:0 0;">TESTES TRANSPORTADORA</span></div>
<div style="position:absolute;left:0;top:251px;width:824px;height:1px;background:#a0a0a0;"></div>
<span class="t" style="left:-1px;width:77px;text-align:right;top:237px;font-size:11px;line-height:13px;">430</span>
<span class="t" style="left:82px;top:237px;width:95px;overflow:hidden;font-size:11px;line-height:13px;">1031326/1</span>
<span class="t" style="left:182px;top:237px;width:95px;overflow:hidden;font-size:11px;line-height:13px;">29/08/2022</span>
<span class="t" style="left:282px;top:237px;width:95px;overflow:hidden;font-size:11px;line-height:13px;">01/09/2022</span>
<span class="t" style="left:379px;width:96px;text-align:right;top:237px;font-size:11px;line-height:13px;">10,00</span>
<div style="position:absolute;left:481px;top:237px;width:225px;height:13px;overflow:hidden;"><span class="t" style="left:0;top:0;font-size:11px;line-height:13px;transform:scaleX(0.9);transform-origin:0 0;">TESTES TRANSPORTADORA</span></div>
<div style="position:absolute;left:0;top:269px;width:824px;height:1px;background:#a0a0a0;"></div>
<span class="t" style="left:-1px;width:77px;text-align:right;top:255px;font-size:11px;line-height:13px;">432</span>
<span class="t" style="left:82px;top:255px;width:95px;overflow:hidden;font-size:11px;line-height:13px;">1031330/1</span>
<span class="t" style="left:182px;top:255px;width:95px;overflow:hidden;font-size:11px;line-height:13px;">01/09/2022</span>
<span class="t" style="left:282px;top:255px;width:95px;overflow:hidden;font-size:11px;line-height:13px;">05/09/2022</span>
<span class="t" style="left:379px;width:96px;text-align:right;top:255px;font-size:11px;line-height:13px;">6,00</span>
<div style="position:absolute;left:481px;top:255px;width:225px;height:13px;overflow:hidden;"><span class="t" style="left:0;top:0;font-size:11px;line-height:13px;transform:scaleX(0.9);transform-origin:0 0;">TESTES TRANSPORTADORA</span></div>
<div style="position:absolute;left:0;top:287px;width:824px;height:1px;background:#a0a0a0;"></div>
<span class="t" style="left:-1px;width:77px;text-align:right;top:273px;font-size:11px;line-height:13px;">434</span>
<span class="t" style="left:82px;top:273px;width:95px;overflow:hidden;font-size:11px;line-height:13px;">4579/1</span>
<span class="t" style="left:182px;top:273px;width:95px;overflow:hidden;font-size:11px;line-height:13px;">01/09/2022</span>
<span class="t" style="left:282px;top:273px;width:95px;overflow:hidden;font-size:11px;line-height:13px;">01/09/2022</span>
<span class="t" style="left:379px;width:96px;text-align:right;top:273px;font-size:11px;line-height:13px;">10,00</span>
<div style="position:absolute;left:481px;top:273px;width:225px;height:13px;overflow:hidden;"><span class="t" style="left:0;top:0;font-size:11px;line-height:13px;transform:scaleX(0.9);transform-origin:0 0;">TRANSPORTADORA</span></div>
<div style="position:absolute;left:0;top:305px;width:824px;height:1px;background:#a0a0a0;"></div>
<span class="t" style="left:-1px;width:77px;text-align:right;top:291px;font-size:11px;line-height:13px;">435</span>
<span class="t" style="left:82px;top:291px;width:95px;overflow:hidden;font-size:11px;line-height:13px;">999000027/1</span>
<span class="t" style="left:182px;top:291px;width:95px;overflow:hidden;font-size:11px;line-height:13px;">01/09/2022</span>
<span class="t" style="left:282px;top:291px;width:95px;overflow:hidden;font-size:11px;line-height:13px;">05/09/2022</span>
<span class="t" style="left:379px;width:96px;text-align:right;top:291px;font-size:11px;line-height:13px;">12,00</span>
<div style="position:absolute;left:481px;top:291px;width:225px;height:13px;overflow:hidden;"><span class="t" style="left:0;top:0;font-size:11px;line-height:13px;transform:scaleX(0.9);transform-origin:0 0;">TESTES TRANSPORTADORA</span></div>
<div style="position:absolute;left:0;top:323px;width:824px;height:1px;background:#a0a0a0;"></div>
<span class="t" style="left:-1px;width:77px;text-align:right;top:309px;font-size:11px;line-height:13px;">436</span>
<span class="t" style="left:82px;top:309px;width:95px;overflow:hidden;font-size:11px;line-height:13px;">999000028/1</span>
<span class="t" style="left:182px;top:309px;width:95px;overflow:hidden;font-size:11px;line-height:13px;">01/09/2022</span>
<span class="t" style="left:282px;top:309px;width:95px;overflow:hidden;font-size:11px;line-height:13px;">05/09/2022</span>
<span class="t" style="left:379px;width:96px;text-align:right;top:309px;font-size:11px;line-height:13px;">12,00</span>
<div style="position:absolute;left:481px;top:309px;width:225px;height:13px;overflow:hidden;"><span class="t" style="left:0;top:0;font-size:11px;line-height:13px;transform:scaleX(0.9);transform-origin:0 0;">TESTES TRANSPORTADORA</span></div>
<div style="position:absolute;left:79px;top:0;width:1px;height:311px;background:#a0a0a0;"></div>
<div style="position:absolute;left:179px;top:0;width:1px;height:311px;background:#a0a0a0;"></div>
<div style="position:absolute;left:279px;top:0;width:1px;height:311px;background:#a0a0a0;"></div>
<div style="position:absolute;left:379px;top:0;width:1px;height:311px;background:#a0a0a0;"></div>
<div style="position:absolute;left:478px;top:0;width:1px;height:311px;background:#a0a0a0;"></div>
<div style="position:absolute;left:708px;top:0;width:1px;height:311px;background:#a0a0a0;"></div>
</div>
<div style="position:absolute;left:953px;top:420px;width:4px;height:276px;background:#acacac;"></div>
<div style="position:absolute;left:956px;top:697px;width:1px;height:33px;background:#cdcdcd;"></div>
<div style="position:absolute;left:757px;top:737px;width:97px;height:25px;box-sizing:border-box;border:1px solid #adadad;background:#e5e5e5;"></div>
<div style="position:absolute;left:862px;top:737px;width:97px;height:25px;box-sizing:border-box;border:1px solid #adadad;background:#e5e5e5;"></div>
<svg style="left:790px;top:744px" width="16" height="12" viewBox="0 0 16 12"><path d="M2 6.2 L5.6 9.6 L13.8 1.8" fill="none" stroke="#62a08c" stroke-width="2.5"/></svg>
<span class="t" style="left:809px;top:744px;font-size:11px;line-height:13px;"><u>O</u>k</span>
<svg style="left:880px;top:743px" width="15" height="14" viewBox="0 0 15 14"><path d="M1.5 1.5 L13.5 12.5 M13.5 1.5 L1.5 12.5" fill="none" stroke="#d46e55" stroke-width="2"/></svg>
<span class="t" style="left:899px;top:744px;font-size:11px;line-height:13px;letter-spacing:-0.2px;"><u>C</u>ancelar</span>
</body></html>
